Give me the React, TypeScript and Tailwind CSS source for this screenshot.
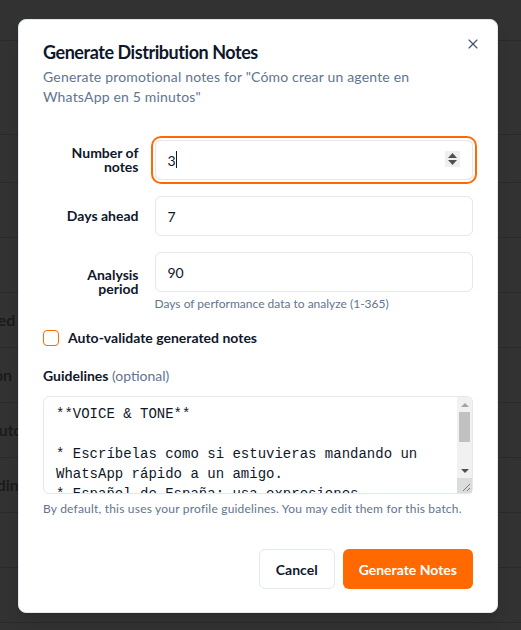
import React from "react";

function Spinner() {
  return (
    <div className="absolute right-[13px] top-[11px] flex h-[16px] w-[15px] flex-col items-center justify-center gap-[2px] bg-[#efefef]">
      <svg width="9" height="5" viewBox="0 0 9 5"><path d="M4.5 0L9 5H0z" fill="#505050" /></svg>
      <svg width="9" height="5" viewBox="0 0 9 5"><path d="M0 0h9L4.5 5z" fill="#505050" /></svg>
    </div>
  );
}

function FakeScrollbar() {
  return (
    <div className="pointer-events-none absolute right-[1px] top-[1px] flex h-[96px] w-[15px] flex-col">
      <div className="flex h-[81px] flex-col bg-[#f1f1f1]">
        <div className="flex h-[15px] items-center justify-center">
          <svg width="8" height="4" viewBox="0 0 8 4"><path d="M4 0L8 4H0z" fill="#a3a3a3" /></svg>
        </div>
        <div className="mx-auto h-[30px] w-[11px] bg-[#c1c1c1]" />
        <div className="flex-1" />
        <div className="flex h-[15px] items-center justify-center">
          <svg width="8" height="4" viewBox="0 0 8 4"><path d="M0 0h8L4 4z" fill="#505050" /></svg>
        </div>
      </div>
      <div className="relative h-[15px] bg-[#dcdcdc]">
        <svg className="absolute bottom-0 right-0" width="15" height="15" viewBox="0 0 15 15">
          <path d="M13 6L6 13M13 10L10 13" stroke="#777" strokeWidth="1" />
        </svg>
      </div>
    </div>
  );
}

const guidelines = `**VOICE & TONE**

* Escríbelas como si estuvieras mandando un WhatsApp rápido a un amigo.
* Español de España: usa expresiones coloquiales y cercanas, sin sonar forzado.
* Frases cortas, directas y con energía.
* Nada de emojis en exceso: uno como mucho.

**STRUCTURE**

* Empieza con un gancho.
* Termina con una llamada a la acción clara.`;

export default function App() {
  const bgRows = [
    { h: "h-[41px]", t: "" },
    { h: "h-[94px]", t: "" },
    { h: "h-[48px]", t: "" },
    { h: "h-[55px]", t: "" },
    { h: "h-[55px]", t: "" },
    { h: "h-[55px]", t: "Scheduled", ml: "-ml-[58px]" },
    { h: "h-[55px]", t: "Publicación", ml: "-ml-[69px]" },
    { h: "h-[55px]", t: "Automático", ml: "-ml-[12px]" },
    { h: "h-[55px]", t: "Pending", ml: "-ml-[30px]" },
    { h: "h-[55px]", t: "" },
    { h: "h-[55px]", t: "" },
  ];
  return (
    <div className="relative h-[630px] w-[521px] overflow-hidden bg-[#323232] font-['Lato',sans-serif]">
      <div className="flex flex-col">
        {bgRows.map((r, i) => (
          <div key={i} className={`${r.h} flex items-center border-b border-[#2a2a2a]`}>
            {r.t ? (
              <span className={`${r.ml} whitespace-nowrap text-[16px] font-semibold text-[#191919]`}>{r.t}</span>
            ) : null}
          </div>
        ))}
      </div>

      <div className="absolute left-[18px] top-[19px] w-[480px] rounded-lg border border-slate-200 bg-white px-6 pb-[23px] pt-[23px] shadow-lg">
        <button className="absolute right-[16px] top-[16px] text-slate-600">
          <svg width="16" height="16" viewBox="0 0 24 24" fill="none" stroke="currentColor" strokeWidth="1.75" strokeLinecap="round" strokeLinejoin="round">
            <path d="M18 6 6 18" />
            <path d="m6 6 12 12" />
          </svg>
        </button>

        <h2 className="text-[18px] font-bold leading-none tracking-tight text-slate-900">Generate Distribution Notes</h2>
        <p className="mt-1.5 pr-6 text-[14px] leading-5 tracking-[0.18px] text-slate-500">
          Generate promotional notes for "Cómo crear un agente en WhatsApp en 5 minutos"
        </p>

        <div className="mt-[33px] flex flex-col gap-4">
          <div className="grid grid-cols-4 items-center gap-4">
            <label className="pl-1 text-right text-[14px] font-bold leading-[14px] text-slate-900">Number of notes</label>
            <div className="col-span-3">
              <div className="relative rounded-md ring-2 ring-orange-500 ring-offset-2">
                <input
                  readOnly
                  value="3"
                  className="h-10 w-full rounded-md border border-slate-200 bg-white px-3 text-[14px] text-slate-900 outline-none"
                />
                <span className="absolute left-[21px] top-[11px] h-[17px] w-px bg-slate-900" />
                <Spinner />
              </div>
            </div>
          </div>

          <div className="grid grid-cols-4 items-center gap-4">
            <label className="pl-1 text-right text-[14px] font-bold leading-[14px] text-slate-900">Days ahead</label>
            <div className="col-span-3">
              <input
                readOnly
                value="7"
                className="h-10 w-full rounded-md border border-slate-200 bg-white px-3 text-[14px] text-slate-900 outline-none"
              />
            </div>
          </div>

          <div className="grid grid-cols-4 items-center gap-4">
            <label className="pl-2 text-right text-[14px] font-bold leading-[14px] text-slate-900">Analysis period</label>
            <div className="col-span-3">
              <input
                readOnly
                value="90"
                className="h-10 w-full rounded-md border border-slate-200 bg-white px-3 text-[14px] text-slate-900 outline-none"
              />
              <p className="mt-1 text-[12px] leading-4 text-slate-500">Days of performance data to analyze (1-365)</p>
            </div>
          </div>
        </div>

        <label className="mt-4 flex h-5 items-center gap-[9px]">
          <span className="h-4 w-4 rounded-[4px] border border-orange-500 bg-white" />
          <span className="text-[14px] font-bold leading-5 text-slate-900">Auto-validate generated notes</span>
        </label>

        <div className="mt-[18px]">
          <div className="text-[14px] font-bold leading-5 text-slate-900">
            Guidelines <span className="font-normal text-slate-500">(optional)</span>
          </div>
          <div className="relative mt-[10px]">
            <textarea
              readOnly
              value={guidelines}
              className="block h-[98px] w-full resize-none overflow-hidden rounded-md border border-slate-200 bg-white py-[7px] pl-3 pr-[27px] font-['Liberation_Mono',monospace] text-[14px] leading-5 text-slate-900 outline-none"
            />
            <FakeScrollbar />
          </div>
          <p className="mt-[7px] text-[12px] leading-4 tracking-[0.2px] text-slate-500">
            By default, this uses your profile guidelines. You may edit them for this batch.
          </p>
        </div>

        <div className="mt-[32px] flex justify-end gap-2">
          <button className="h-10 rounded-md border border-slate-200 bg-white px-4 text-[14px] font-bold text-slate-900">Cancel</button>
          <button className="h-10 rounded-md bg-orange-500 px-4 text-[14px] font-bold text-white">Generate Notes</button>
        </div>
      </div>
    </div>
  );
}
